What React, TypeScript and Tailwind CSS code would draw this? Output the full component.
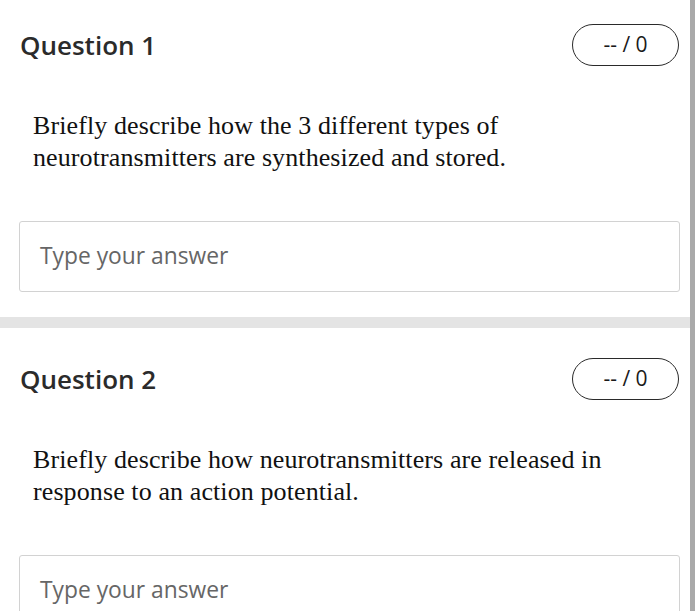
import React from 'react';

interface Question {
  id: number;
  title: string;
  prompt: string;
}

const questions: Question[] = [
  {
    id: 1,
    title: 'Question 1',
    prompt: 'Briefly describe how the 3 different types of neurotransmitters are synthesized and stored.',
  },
  {
    id: 2,
    title: 'Question 2',
    prompt: 'Briefly describe how neurotransmitters are released in response to an action potential.',
  },
];

const sans = { fontFamily: '"Open Sans", "Noto Sans", sans-serif' };

const QuestionCard: React.FC<{ q: Question; last: boolean }> = ({ q, last }) => (
  <div className={`pt-[30px] pl-[19px] pr-[10px] ${last ? '' : 'pb-[25px] border-b-[11px] border-[#e4e4e4]'}`}>
    {/* Header */}
    <div className="flex items-center justify-between h-[42px] pr-[1px]">
      <h2 className="text-[26px] font-semibold text-[#2b2b2b] pl-[1px]" style={sans}>{q.title}</h2>
      <div
        className="w-[107px] h-[42px] rounded-full border-[1.5px] border-[#2a2a2a] flex items-center justify-center text-[21px] font-medium text-[#1a1a1a]"
        style={sans}
      >
        -- / 0
      </div>
    </div>

    {/* Prompt */}
    <p className="mt-[44px] pl-[14px] pr-[60px] text-[26px] leading-[32px] tracking-[0.1px] text-[#111] font-['Liberation_Serif',serif]">
      {q.prompt}
    </p>

    {/* Answer */}
    <div className="mt-[47px] h-[71px] border border-[#d2d2d2] rounded-[3px] flex items-center px-[20px]">
      <span className="text-[22.8px] text-[#666]" style={sans}>Type your answer</span>
    </div>
  </div>
);

export default function App() {
  return (
    <div className="w-[700px] h-[611px] overflow-hidden bg-white flex">
      <div className="w-[690px] -mt-[6px]">
        {questions.map((q, i) => (
          <QuestionCard key={q.id} q={q} last={i === questions.length - 1} />
        ))}
      </div>
      <div className="w-[5px] h-full bg-[#a9a9a9]" />
      <div className="w-[5px] h-full bg-white" />
    </div>
  );
}
